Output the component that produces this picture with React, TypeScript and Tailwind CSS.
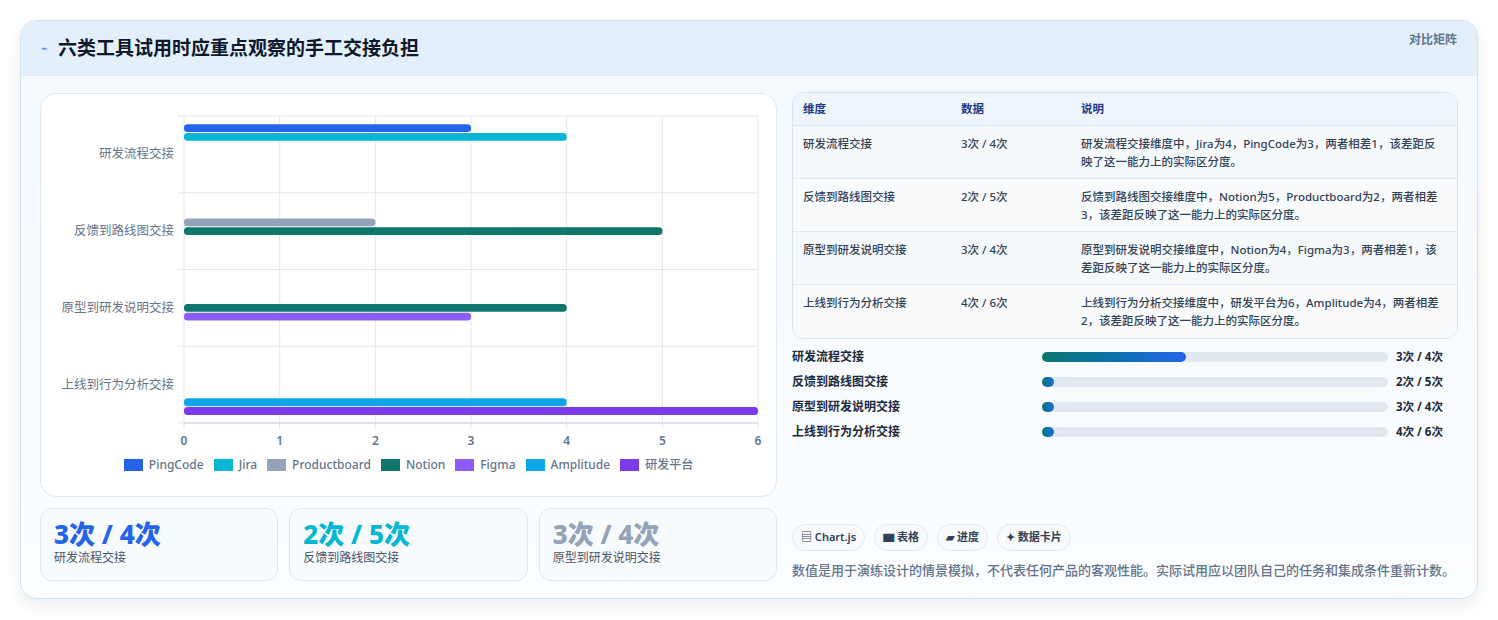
const FONT = { fontFamily: '"Noto Sans", "Noto Sans CJK SC", sans-serif' }

const COLORS = ['#2563eb', '#06b6d4', '#94a3b8', '#0f766e', '#8b5cf6', '#0ea5e9', '#7c3aed']
const LEGEND = ['PingCode', 'Jira', 'Productboard', 'Notion', 'Figma', 'Amplitude', '研发平台']
const CATS = ['研发流程交接', '反馈到路线图交接', '原型到研发说明交接', '上线到行为分析交接']
// [category, dataset index, value]
const BARS: [number, number, number][] = [
  [0, 0, 3], [0, 1, 4], [1, 2, 2], [1, 3, 5], [2, 3, 4], [2, 4, 3], [3, 5, 4], [3, 6, 6],
]

const ROWS = [
  ['研发流程交接', '3次 / 4次', '研发流程交接维度中，Jira为4，PingCode为3，两者相差1，该差距反映了这一能力上的实际区分度。'],
  ['反馈到路线图交接', '2次 / 5次', '反馈到路线图交接维度中，Notion为5，Productboard为2，两者相差3，该差距反映了这一能力上的实际区分度。'],
  ['原型到研发说明交接', '3次 / 4次', '原型到研发说明交接维度中，Notion为4，Figma为3，两者相差1，该差距反映了这一能力上的实际区分度。'],
  ['上线到行为分析交接', '4次 / 6次', '上线到行为分析交接维度中，研发平台为6，Amplitude为4，两者相差2，该差距反映了这一能力上的实际区分度。'],
]

function Chart() {
  const x0 = 143, unit = 95.67, top = 22, catH = 76.75
  return (
    <svg width="736" height="402" className="block">
      {[0, 1, 2, 3, 4, 5, 6].map((i) => (
        <line key={i} x1={x0 + i * unit} x2={x0 + i * unit} y1={top} y2={top + catH * 4 + 6} stroke="#e5e7eb" />
      ))}
      {[0, 1, 2, 3, 4].map((i) => (
        <line key={i} x1={x0 - 6} x2={x0 + 6 * unit} y1={top + i * catH} y2={top + i * catH} stroke="#e5e7eb" />
      ))}
      <line x1={x0} x2={x0 + 6 * unit} y1={top + 4 * catH} y2={top + 4 * catH} stroke="#cbd5e1" />
      {BARS.map(([c, d, v], i) => {
        const y = top + c * catH + catH * 0.1 + (catH * 0.8 / 7) * d + 0.45
        return <rect key={i} x={x0} y={y} width={v * unit} height={7.9} rx={3.5} fill={COLORS[d]} />
      })}
      {CATS.map((c, i) => (
        <text key={c} x={x0 - 10} y={top + i * catH + catH / 2 + 4} textAnchor="end" fontSize="12.5" fill="#64748b" style={FONT}>{c}</text>
      ))}
      {[0, 1, 2, 3, 4, 5, 6].map((i) => (
        <text key={i} x={x0 + i * unit} y={351} textAnchor="middle" fontSize="12" fontWeight="600" fill="#64748b" style={FONT}>{i}</text>
      ))}
    </svg>
  )
}

export default function App() {
  return (
    <div className="min-h-[620px] bg-white px-5 pt-5" style={FONT}>
      <div className="h-[579px] overflow-hidden rounded-2xl border border-[#cfe3f5] bg-gradient-to-b from-[#f3f9fe] to-[#fbfdff] shadow-[0_6px_16px_rgba(15,23,42,0.08)]">
        <div className="flex h-[55px] items-center justify-between border-b border-[#dcebf8] bg-[#e3f0fc] pl-5 pr-5">
          <div className="flex items-center gap-2.5">
            <span className="text-[11px] text-[#3b82f6]">⌁</span>
            <span className="text-[19px] font-bold text-[#0f172a]">六类工具试用时应重点观察的手工交接负担</span>
          </div>
          <span className="-mt-4 text-xs font-semibold text-[#64748b]">对比矩阵</span>
        </div>
        <div className="flex gap-[15px] px-[19px] pt-[17px]">
          <div className="w-[737px] shrink-0">
            <div className="h-[404px] rounded-2xl border border-[#e2e8f0] bg-white">
              <Chart />
              <div className="-mt-[40px] flex items-center justify-center gap-2.5 text-[12px] font-medium text-[#64748b]">
                {LEGEND.map((l, i) => (
                  <span key={l} className="flex items-center gap-1.5">
                    <span className="inline-block h-[12px] w-[19px]" style={{ background: COLORS[i] }} />
                    {l}
                  </span>
                ))}
              </div>
            </div>
            <div className="mt-[11px] grid grid-cols-3 gap-[11px]">
              {[
                ['3次 / 4次', '研发流程交接', 'text-[#2563eb]'],
                ['2次 / 5次', '反馈到路线图交接', 'text-[#06b6d4]'],
                ['3次 / 4次', '原型到研发说明交接', 'text-[#94a3b8]'],
              ].map(([v, l, c]) => (
                <div key={l} className="h-[73px] rounded-xl border border-[#dbe8f6] bg-[#f8fbfe] px-[13px] pt-[9px]">
                  <div className={`text-[26px] font-extrabold leading-8 ${c}`}>{v}</div>
                  <div className="text-xs text-[#475569]">{l}</div>
                </div>
              ))}
            </div>
          </div>
          <div className="flex flex-1 flex-col">
            <div className="-mt-[1px] overflow-hidden rounded-xl border border-[#d5e2ef] bg-white text-[11.5px]">
              <div className="flex h-[33px] items-center border-b border-[#dbe6f1] bg-[#eef5fd] font-semibold text-[#1e3a8a]">
                <div className="w-[168px] pl-[10px]">维度</div>
                <div className="w-[120px]">数据</div>
                <div className="flex-1">说明</div>
              </div>
              {ROWS.map((r, i) => (
                <div key={i} className={`flex h-[53px] border-[#e2e8f0] pt-[9px] font-medium text-[#334155] ${i < 3 ? 'border-b' : ''} ${i % 2 ? 'bg-[#f8fafc]' : 'bg-[#f6f9fc]'}`}>
                  <div className="w-[168px] pl-[10px]">{r[0]}</div>
                  <div className="w-[120px]">{r[1]}</div>
                  <div className="flex-1 pr-3 leading-[18px]">{r[2]}</div>
                </div>
              ))}
            </div>
            <div className="mt-[9px] flex flex-col gap-[7px] text-[12px] font-semibold text-[#1e293b]">
              {[
                ['研发流程交接', '3次 / 4次', 25],
                ['反馈到路线图交接', '2次 / 5次', 2],
                ['原型到研发说明交接', '3次 / 4次', 2],
                ['上线到行为分析交接', '4次 / 6次', 2],
              ].map(([l, v, w]) => (
                <div key={l as string} className="flex h-[18px] items-center">
                  <div className="w-[250px]">{l}</div>
                  <div className="h-[10px] w-[346px] rounded-full bg-[#e2e8f0]">
                    <div className="h-full min-w-[12px] rounded-full bg-gradient-to-r from-[#0f766e] to-[#2563eb]" style={{ width: `${(w as number) * 1.66}%` }} />
                  </div>
                  <div className="ml-2 text-[11.5px] font-bold">{v}</div>
                </div>
              ))}
            </div>
            <div className="mt-[83px] flex gap-[9px] text-[11px] font-semibold text-[#334155]">
              {['▤ Chart.js', '▆ 表格', '▰ 进度', '✦ 数据卡片'].map((c) => (
                <span key={c} className="rounded-full border border-[#e2e8f0] bg-[#f8fafc] px-2 py-[4px]">{c}</span>
              ))}
            </div>
            <p className="mt-[10px] text-[13px] font-medium text-[#64748b]">数值是用于演练设计的情景模拟，不代表任何产品的客观性能。实际试用应以团队自己的任务和集成条件重新计数。</p>
          </div>
        </div>
      </div>
    </div>
  )
}
